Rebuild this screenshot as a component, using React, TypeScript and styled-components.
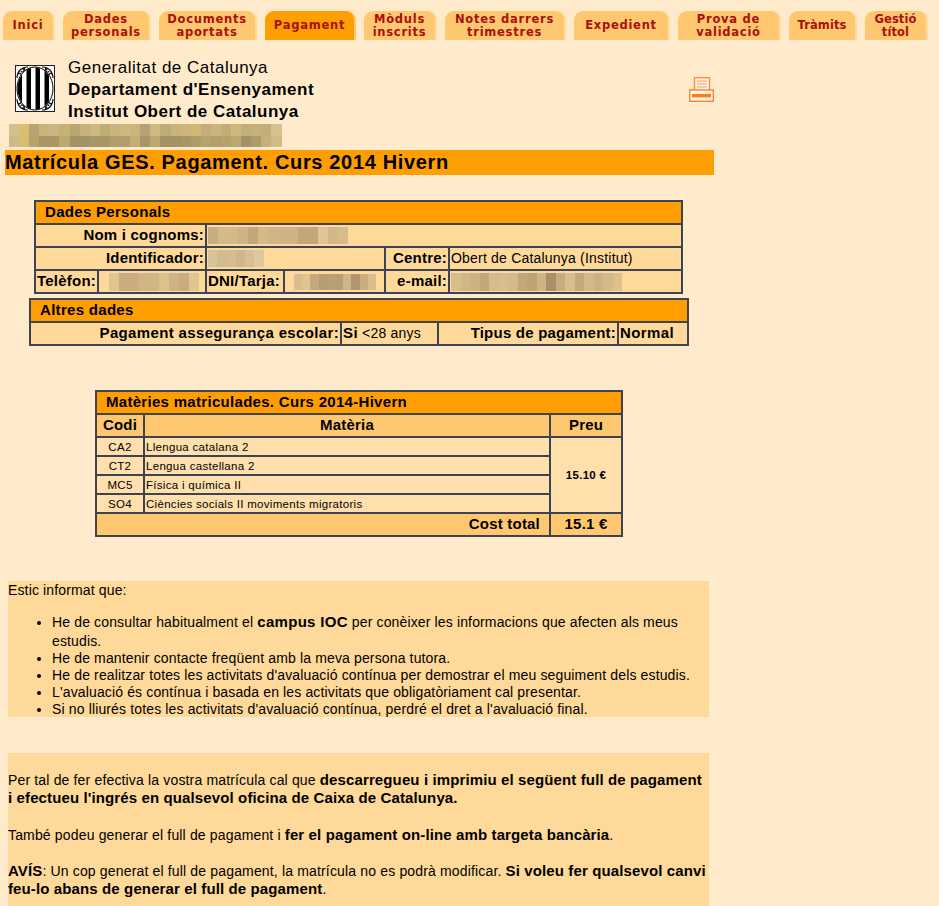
import React from 'react';
import styled, { createGlobalStyle } from 'styled-components';

const GlobalStyle = createGlobalStyle`
  html, body {
    margin: 0;
    height: 906px;
    overflow: hidden;
    background: #ffebcc;
    font-family: 'Liberation Sans', Arial, sans-serif;
    color: #000;
  }
`;

const tabs = [
  { lines: ['Inici'], width: 52 },
  { lines: ['Dades', 'personals'], width: 88 },
  { lines: ['Documents', 'aportats'], width: 98 },
  { lines: ['Pagament'], width: 91, active: true },
  { lines: ['Mòduls', 'inscrits'], width: 73 },
  { lines: ['Notes darrers', 'trimestres'], width: 121 },
  { lines: ['Expedient'], width: 96 },
  { lines: ['Prova de', 'validació'], width: 103 },
  { lines: ['Tràmits'], width: 68, tight: true },
  { lines: ['Gestió', 'títol'], width: 63, tight: true },
];

const subjects = [
  ['CA2', 'Llengua catalana 2'],
  ['CT2', 'Lengua castellana 2'],
  ['MC5', 'Física i química II'],
  ['SO4', 'Ciències socials II moviments migratoris'],
];

const topRowA = ['#d4bf8f', '#d9bd72', '#b8a373', '#c9b37c', '#cbb683', '#c7b17a', '#baa671', '#c7b17a', '#cdb87d', '#bfab74', '#c9b47f', '#cdb880', '#c9b47a', '#b5a272', '#cfb97e', '#bfab74', '#c9b47f', '#cbb67c', '#cfb972', '#c3ae78', '#c9b47f', '#c0ac74', '#cdb87d', '#c2ae76', '#c4b07a', '#c2ae76', '#d6c290'];
const topRowB = ['#cdb98c', '#d9bd6e', '#b5a26c', '#a89668', '#a89668', '#bda96f', '#a39265', '#a39265', '#a89668', '#a89668', '#b09e6c', '#b09e6c', '#c2ad74', '#a89668', '#bda96f', '#a39265', '#a39265', '#a89668', '#ae9c6a', '#b5a26c', '#b09e6c', '#b5a26c', '#bda96f', '#a39265', '#ad9b6b', '#c4b07a', '#d0bb85'];
const nameCells = ['#c9ad80', '#d4b98b', '#d4b98b', '#ceb386', '#c2a77a', '#d4b98b', '#d0b587', '#ceb386', '#ceb386', '#c2a77a', '#c2a77a', '#dec496', '#d2b789', '#d6bb8d'];
const idCells = ['#d8c298', '#d2ba92', '#d4bc94', '#cdb58c', '#d6be96', '#e0c89c'];
const phoneCells = ['#e0c491', '#c9ad80', '#c9ad80', '#d0b587', '#d0b587', '#dcc08e', '#ceb386', '#c9ad80', '#e0c491'];
const dniCells = ['#d8bd8e', '#e0c491', '#c4a97c', '#b89d72', '#bba075', '#b89d72', '#d0b587', '#b09570', '#c9ad80', '#d8bd8e'];
const mailCells = ['#d8bd8e', '#d0b587', '#cdb184', '#c2a77a', '#d6bb8d', '#d8bd8e', '#d4b98b', '#c2a77a', '#bea377', '#ceb386', '#a89068', '#c8ac80', '#d8bd8e', '#c4a97c', '#d4b98b', '#cdb184', '#d4b98b', '#dcc08e'];

const Emblem = () => (
  <svg width="40" height="47" viewBox="0 0 40 47">
    <rect x="0.5" y="0.5" width="39" height="46" fill="#fff" stroke="#222" />
    <g fill="none" stroke="#111" strokeWidth="1.1">
      <path d="M2 13C2 7 6 2 13 2M5 5c2-2 5-1 4 1s-3 1-3 0M3 9c1-1 3-1 3 1M9 3c1 1 1 3-1 3" />
      <path d="M38 13C38 7 34 2 27 2M35 5c-2-2-5-1-4 1s3 1 3 0M37 9c-1-1-3-1-3 1M31 3c-1 1-1 3 1 3" />
      <path d="M2 34c0 6 4 11 11 11M5 42c2 2 5 1 4-1s-3-1-3 0M3 38c1 1 3 1 3-1M9 44c1-1 1-3-1-3" />
      <path d="M38 34c0 6-4 11-11 11M35 42c-2 2-5 1-4-1s3-1 3 0M37 38c-1 1-3 1-3-1M31 44c-1-1-1-3 1-3" />
    </g>
    <clipPath id="shield">
      <ellipse cx="20" cy="23.5" rx="17.5" ry="21" />
    </clipPath>
    <ellipse cx="20" cy="23.5" rx="18" ry="21.5" fill="#fff" stroke="#000" />
    <g clipPath="url(#shield)" fill="#000">
      <rect x="2" y="0" width="5" height="47" />
      <rect x="11.5" y="0" width="4.5" height="47" />
      <rect x="20.5" y="0" width="4.5" height="47" />
      <rect x="29.5" y="0" width="4.5" height="47" />
    </g>
  </svg>
);

const PrinterIcon = () => (
  <svg width="25" height="25" viewBox="0 0 25 25" fill="none">
    <rect x="5.5" y="0.7" width="15" height="13" fill="#fff3e2" stroke="#ff8a3c" strokeWidth="1.4" />
    <path d="M8 4h10M8 7h10M8 10h10" stroke="#ff9b57" strokeWidth="1.2" />
    <rect x="0.7" y="13" width="23.6" height="11.3" fill="#fff3e2" stroke="#ff8034" strokeWidth="1.4" />
    <rect x="3" y="17" width="19" height="3.4" fill="#ff7a1a" />
  </svg>
);

function Mosaic({ cells, cell, height, inset = 0 }: { cells: string[]; cell: number; height: number; inset?: number }) {
  return (
    <MosaicRow $height={height} $inset={inset}>
      {cells.map((c, i) => (
        <MosaicCell key={i} $cell={cell} $color={c} />
      ))}
    </MosaicRow>
  );
}

export default function App() {
  return (
    <>
      <GlobalStyle />
      <TabBar>
        {tabs.map((tab) => (
          <Tab key={tab.lines[0]} $width={tab.width} $active={tab.active} $tight={tab.tight}>
            {tab.lines.map((line) => (
              <span key={line}>{line}</span>
            ))}
          </Tab>
        ))}
      </TabBar>

      <Content>
        <Letterhead>
          <EmblemBox>
            <Emblem />
          </EmblemBox>
          <Institution>
            <div>Generalitat de Catalunya</div>
            <strong>Departament d'Ensenyament</strong>
            <strong>Institut Obert de Catalunya</strong>
          </Institution>
          <PrintButton>
            <PrinterIcon />
          </PrintButton>
        </Letterhead>

        <UserMosaic>
          <Mosaic cells={topRowA} cell={10.1} height={12} />
          <Mosaic cells={topRowB} cell={10.1} height={11} />
        </UserMosaic>

        <PageTitle>Matrícula GES. Pagament. Curs 2014 Hivern</PageTitle>

        <DataTable $left={34} $width={647} $top={25}>
          <colgroup>
            {[63, 108, 78, 101, 64, 233].map((w, i) => (
              <Col key={i} $w={w} />
            ))}
          </colgroup>
          <tbody>
            <tr>
              <HeadCell colSpan={6}>Dades Personals</HeadCell>
            </tr>
            <tr>
              <Label colSpan={2}>Nom i cognoms:</Label>
              <Value colSpan={4}>
                <Mosaic cells={nameCells} cell={10} height={17} />
              </Value>
            </tr>
            <tr>
              <Label colSpan={2}>Identificador:</Label>
              <Value colSpan={2}>
                <Mosaic cells={idCells} cell={9.3} height={17} />
              </Value>
              <Label>Centre:</Label>
              <Value>Obert de Catalunya (Institut)</Value>
            </tr>
            <tr>
              <Label $left>Telèfon:</Label>
              <Value>
                <Mosaic cells={phoneCells} cell={10} height={18} inset={9} />
              </Value>
              <Label $left>DNI/Tarja:</Label>
              <Value>
                <Mosaic cells={dniCells} cell={8.2} height={16} inset={8} />
              </Value>
              <Label>e-mail:</Label>
              <Value>
                <Mosaic cells={mailCells} cell={9.5} height={18} />
              </Value>
            </tr>
          </tbody>
        </DataTable>

        <DataTable $left={29} $width={658} $top={4}>
          <colgroup>
            {[311, 97, 180, 70].map((w, i) => (
              <Col key={i} $w={w} />
            ))}
          </colgroup>
          <tbody>
            <tr>
              <HeadCell colSpan={4}>Altres dades</HeadCell>
            </tr>
            <tr>
              <Label $wide>Pagament assegurança escolar:</Label>
              <Value $raised>
                <ValueStrong>Si</ValueStrong> &lt;28 anys
              </Value>
              <Label>Tipus de pagament:</Label>
              <Value $raised>
                <ValueStrong>Normal</ValueStrong>
              </Value>
            </tr>
          </tbody>
        </DataTable>

        <DataTable $left={95} $width={526} $top={44}>
          <colgroup>
            {[48, 406, 72].map((w, i) => (
              <Col key={i} $w={w} />
            ))}
          </colgroup>
          <tbody>
            <tr>
              <HeadCell colSpan={3}>Matèries matriculades. Curs 2014-Hivern</HeadCell>
            </tr>
            <tr>
              <ColumnHead>Codi</ColumnHead>
              <ColumnHead>Matèria</ColumnHead>
              <ColumnHead>Preu</ColumnHead>
            </tr>
            {subjects.map(([code, name], i) => (
              <SubjectRow key={code}>
                <SubjectCode>{code}</SubjectCode>
                <SubjectName>{name}</SubjectName>
                {i === 0 && <PriceCell rowSpan={4}>15.10 €</PriceCell>}
              </SubjectRow>
            ))}
            <tr>
              <TotalLabel colSpan={2}>Cost total</TotalLabel>
              <ColumnHead>15.1 €</ColumnHead>
            </tr>
          </tbody>
        </DataTable>

        <NoticeBlock $top={44}>
          <NoticeLine>Estic informat que:</NoticeLine>
          <NoticeList>
            <li>
              He de consultar habitualment el <b>campus IOC</b> per conèixer les informacions que afecten als meus
              estudis.
            </li>
            <li>He de mantenir contacte freqüent amb la meva persona tutora.</li>
            <li>He de realitzar totes les activitats d'avaluació contínua per demostrar el meu seguiment dels estudis.</li>
            <li>L'avaluació és contínua i basada en les activitats que obligatòriament cal presentar.</li>
            <li>Si no lliurés totes les activitats d'avaluació contínua, perdré el dret a l'avaluació final.</li>
          </NoticeList>
        </NoticeBlock>

        <PaymentBlock $top={36}>
          <FirstParagraph>
            Per tal de fer efectiva la vostra matrícula cal que{' '}
            <b>descarregueu i imprimiu el següent full de pagament i efectueu l'ingrés en qualsevol oficina de Caixa de Catalunya.</b>
          </FirstParagraph>
          <p>
            També podeu generar el full de pagament i <b>fer el pagament on-line amb targeta bancària</b>.
          </p>
          <p>
            <b>AVÍS</b>: Un cop generat el full de pagament, la matrícula no es podrà modificar.{' '}
            <b>Si voleu fer qualsevol canvi feu-lo abans de generar el full de pagament</b>.
          </p>
        </PaymentBlock>
      </Content>
    </>
  );
}

const TabBar = styled.nav`
  display: flex;
  gap: 8px;
  height: 29px;
  padding: 11px 0 0 3px;
`;

const Tab = styled.div<{ $width: number; $active?: boolean; $tight?: boolean }>`
  box-sizing: border-box;
  width: ${(p) => p.$width}px;
  height: 29px;
  display: flex;
  flex-direction: column;
  align-items: center;
  justify-content: center;
  border-radius: 9px 9px 0 0;
  background: ${(p) => (p.$active ? '#ff9e00' : '#ffc870')};
  border-right: 2px solid ${(p) => (p.$active ? '#ffc870' : '#ffdca3')};
  color: #a8100c;
  font-family: 'DejaVu Sans', Verdana, sans-serif;
  font-weight: 700;
  font-size: 11.5px;
  line-height: 13px;
  letter-spacing: ${(p) => (p.$tight ? '0.1px' : '0.75px')};
  white-space: nowrap;
`;

const Content = styled.main`
  width: 714px;
`;

const Letterhead = styled.header`
  display: flex;
  height: 71px;
  padding: 13px 0 0 15px;
`;

const EmblemBox = styled.div`
  width: 53px;
  padding-top: 12px;
  flex: none;
`;

const Institution = styled.div`
  display: flex;
  flex-direction: column;
  font-size: 17px;
  line-height: 22px;
  letter-spacing: 0.5px;
  padding-top: 4px;
`;

const PrintButton = styled.div`
  margin: 24px 0 0 auto;
`;

const UserMosaic = styled.div`
  margin-left: 9px;
  height: 23px;
`;

const MosaicRow = styled.div<{ $height: number; $inset: number }>`
  display: flex;
  height: ${(p) => p.$height}px;
  margin-left: ${(p) => p.$inset}px;
`;

const MosaicCell = styled.div<{ $cell: number; $color: string }>`
  width: ${(p) => p.$cell}px;
  background: ${(p) => p.$color};
`;

const PageTitle = styled.h1`
  margin: 3px 0 0 5px;
  height: 25px;
  background: #ff9e00;
  font-size: 20px;
  line-height: 25px;
  font-weight: 700;
  letter-spacing: 0.66px;
`;

const DataTable = styled.table<{ $left: number; $width: number; $top: number }>`
  box-sizing: border-box;
  border-collapse: collapse;
  table-layout: fixed;
  width: ${(p) => p.$width}px;
  margin: ${(p) => p.$top}px 0 0 ${(p) => p.$left}px;
`;

const Col = styled.col<{ $w: number }>`
  width: ${(p) => p.$w}px;
`;

const Cell = styled.td`
  border: 2px solid #3c4454;
  height: 19px;
  padding: 0 1px 2px;
  font-size: 15px;
  line-height: 17px;
  letter-spacing: 0.3px;
  white-space: nowrap;
  overflow: hidden;
`;

const HeadCell = styled(Cell)`
  background: #ff9e00;
  font-weight: 700;
  padding-left: 9px;
`;

const Label = styled(Cell)<{ $left?: boolean; $wide?: boolean }>`
  background: #ffd999;
  font-weight: 700;
  letter-spacing: ${(p) => (p.$wide ? '0.35px' : '0.22px')};
  text-align: ${(p) => (p.$left ? 'left' : 'right')};
`;

const Value = styled(Cell)<{ $raised?: boolean }>`
  background: #ffd999;
  height: ${(p) => (p.$raised ? 19 : 21)}px;
  padding: 0 1px ${(p) => (p.$raised ? 2 : 0)}px;
  font-size: 14px;
  letter-spacing: 0.2px;
`;

const ValueStrong = styled.b`
  font-size: 15px;
  letter-spacing: 0.4px;
`;

const ColumnHead = styled(Cell)`
  background: #ffc870;
  font-weight: 700;
  letter-spacing: 0.2px;
  text-align: center;
`;

const TotalLabel = styled(ColumnHead)`
  text-align: right;
  padding-right: 9px;
`;

const SubjectRow = styled.tr`
  background: #ffe0ad;
`;

const SubjectCode = styled(Cell)`
  height: 17px;
  padding: 0 1px;
  font-size: 11.5px;
  line-height: 14px;
  text-align: center;
`;

const SubjectName = styled(SubjectCode)`
  text-align: left;
`;

const PriceCell = styled(SubjectCode)`
  font-weight: 700;
  text-align: center;
`;

const NoticeBlock = styled.section<{ $top: number }>`
  margin: ${(p) => p.$top}px 5px 0 8px;
  background: #ffd999;
  font-size: 14px;
  line-height: 17px;
  letter-spacing: 0.14px;

  b {
    font-size: 15px;
    line-height: 1;
    letter-spacing: 0.3px;
  }
`;

const NoticeLine = styled.div`
  padding-top: 1px;
`;

const NoticeList = styled.ul`
  height: 104px;
  margin: 14px 0 0;
  padding: 0 0 0 44px;

  li:first-child {
    line-height: 19px;
    margin-bottom: -1px;
  }
`;

const PaymentBlock = styled(NoticeBlock)`
  line-height: 18px;
  letter-spacing: 0.16px;
  padding: 18px 0 60px;

  p {
    margin: 0 0 18px;
  }

  b {
    letter-spacing: 0.12px;
  }
`;

const FirstParagraph = styled.p`
  && {
    margin-bottom: 19px;
  }
`;
